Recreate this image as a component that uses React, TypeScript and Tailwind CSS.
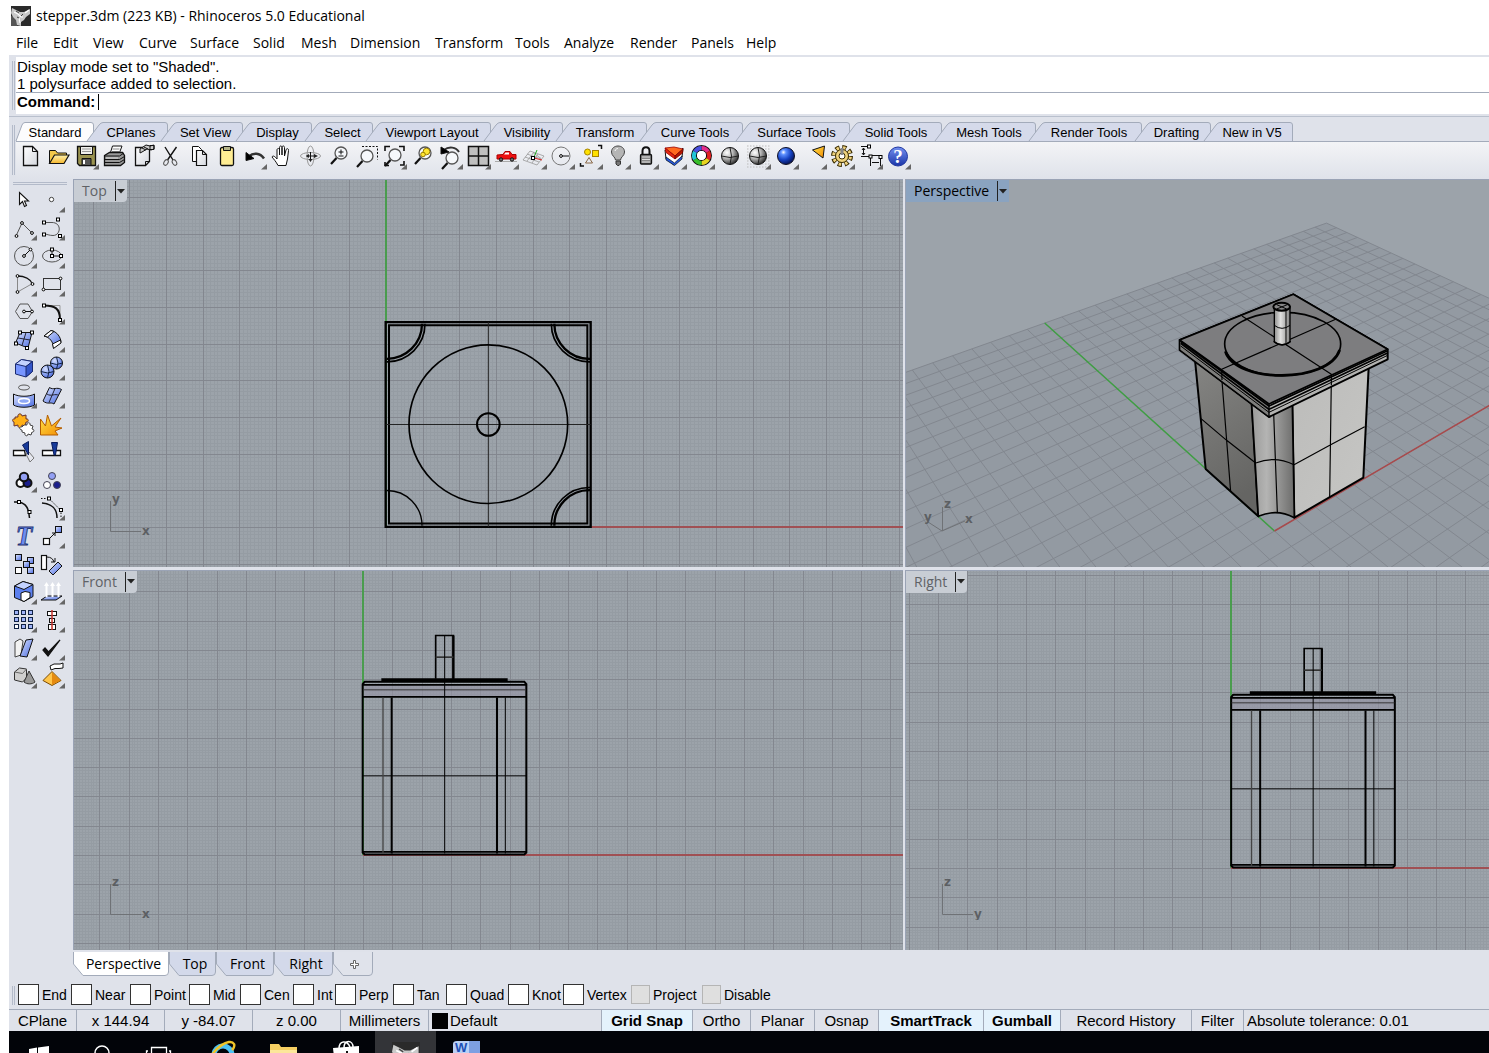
import React from "react";

type IconDef = { name: string; art: React.ReactNode; more?: boolean };

const K = "#111";

/* ---------- shared drawing pieces ---------- */

function Defs() {
  return (
    <svg className="absolute h-0 w-0" aria-hidden="true">
      <defs>
        <linearGradient id="paper" x1="0" y1="0" x2="1" y2="1">
          <stop offset="0" stopColor="#fff" />
          <stop offset="1" stopColor="#d4d7de" />
        </linearGradient>
        <linearGradient id="folder" x1="0" y1="0" x2="0" y2="1">
          <stop offset="0" stopColor="#fff3b0" />
          <stop offset="1" stopColor="#f5b62b" />
        </linearGradient>
        <radialGradient id="grayBall" cx="0.32" cy="0.3" r="0.75">
          <stop offset="0" stopColor="#fff" />
          <stop offset="0.45" stopColor="#bbb" />
          <stop offset="1" stopColor="#2a2a2a" />
        </radialGradient>
        <radialGradient id="blueBall" cx="0.35" cy="0.28" r="0.75">
          <stop offset="0" stopColor="#fff" />
          <stop offset="0.2" stopColor="#5c8fff" />
          <stop offset="0.6" stopColor="#1440c0" />
          <stop offset="1" stopColor="#06104e" />
        </radialGradient>
        <radialGradient id="softBall" cx="0.35" cy="0.3" r="0.8">
          <stop offset="0" stopColor="#d6e0ff" />
          <stop offset="0.6" stopColor="#7d97ee" />
          <stop offset="1" stopColor="#3a55c4" />
        </radialGradient>
        <linearGradient id="help" x1="0" y1="0" x2="0" y2="1">
          <stop offset="0" stopColor="#7390f0" />
          <stop offset="1" stopColor="#1a35a8" />
        </linearGradient>
        <linearGradient id="sheet" x1="0" y1="0" x2="1" y2="1">
          <stop offset="0" stopColor="#dbe4ff" />
          <stop offset="1" stopColor="#4a6be0" />
        </linearGradient>
        <linearGradient id="sun" x1="0" y1="0" x2="1" y2="1">
          <stop offset="0" stopColor="#ffe34a" />
          <stop offset="1" stopColor="#f38a00" />
        </linearGradient>
        <linearGradient id="cove" x1="0" y1="0" x2="1" y2="0">
          <stop offset="0" stopColor="#9a9a99" />
          <stop offset="0.35" stopColor="#b4b4b3" />
          <stop offset="0.6" stopColor="#989897" />
          <stop offset="1" stopColor="#6c6c6b" />
        </linearGradient>
        <linearGradient id="shaft" x1="0" y1="0" x2="1" y2="0">
          <stop offset="0" stopColor="#8d8d8c" />
          <stop offset="0.4" stopColor="#e0e0df" />
          <stop offset="1" stopColor="#858584" />
        </linearGradient>
        <linearGradient id="faceL" x1="0" y1="0" x2="0.3" y2="1">
          <stop offset="0" stopColor="#858583" />
          <stop offset="1" stopColor="#656563" />
        </linearGradient>
        <linearGradient id="faceR" x1="0" y1="0" x2="1" y2="1">
          <stop offset="0" stopColor="#bcbcba" />
          <stop offset="1" stopColor="#c6c6c4" />
        </linearGradient>
      </defs>
    </svg>
  );
}

function Icon({ art, more }: { art: React.ReactNode; more?: boolean }) {
  return (
    <svg width="28" height="28" viewBox="0 0 28 28" fill="none" stroke={K} aria-hidden="true">
      {art}
      {more && <path d="M27 21v5.5h-6z" fill="#666" stroke="none" />}
    </svg>
  );
}

function Node({ x, y }: { x: number; y: number }) {
  return <rect x={x - 1.5} y={y - 1.5} width="3" height="3" fill="#fff" stroke="#000" />;
}

function Dot({ x, y }: { x: number; y: number }) {
  return <circle cx={x} cy={y} r="1.4" fill="#fff" stroke="#000" />;
}

const lens = (cx: number, cy: number, fill = "#f6f8fb") => (
  <>
    <path d={`M${cx - 4.5} ${cy + 5}L${cx - 10} ${cy + 11}`} strokeWidth="2.2" />
    <circle cx={cx} cy={cy} r="6" fill={fill} stroke="#555" strokeWidth="1.3" />
  </>
);

const globeLines = (cx: number, cy: number, r: number, c: string) => (
  <g stroke={c} strokeWidth="1">
    <path d={`M${cx - r} ${cy}q${r} 3 ${2 * r} 0M${cx} ${cy - r}q3 ${r} 0 ${2 * r}`} />
  </g>
);

/* ---------- top toolbar ---------- */

const mainTools: IconDef[] = [
  { name: "New", art: <><path d="M7.500 3.500h9l5 5v14h-14z" fill="url(#paper)" strokeWidth="1.300" /><path d="M16.500 3.500v5h5" /></> },
  { name: "Open", art: <><path d="M5.500 20V7.500h6l2 2.500h9v3" fill="#f3c94b" /><path d="M5.500 20.500l5-8.500h14.500l-5 8.500z" fill="url(#folder)" strokeWidth="1.200" /></> },
  { name: "Save", more: true, art: <><path d="M5.500 3.500h18v19H7.500l-2-2z" fill="#9a9350" strokeWidth="1.300" /><path d="M8.500 3.500h12v8h-12z" fill="#f1f1ee" /><path d="M10 6h9M10 8.500h9" stroke="#999" /><path d="M10 15.500h9v7h-9z" fill="#555" /><path d="M12 17v4" stroke="#fff" strokeWidth="2" /></> },
  { name: "Print", art: <><path d="M10 11l2.500-8h9.500l-3 8z" fill="#fff" /><path d="M12.500 6h7M12 8.500h7" stroke="#888" /><path d="M4.500 12.500l5-3h13l2 3v7l-4 3H4.500z" fill="#999" strokeWidth="1.300" /><path d="M4.500 13h15l4.500-3M4.500 16.500h15l5-3M4.500 19.500h15l5-3" /><path d="M6 15h12" stroke="#ddd" /></> },
  { name: "Document properties", art: <><path d="M7.500 4.500h14v14l-4 4h-10z" fill="url(#paper)" strokeWidth="1.300" /><path d="M17.500 22.500v-4h4" /><path d="M12 6l6-4 4 1 4-1v4l-3 1-4-1-5 3-2 1z" fill="#ccc" /><path d="M22 2.500h4v4h-4zM14 5l4 2M16 4l4 2" /></> },
  { name: "Cut", art: <><path d="M9 4l8 13M20.500 4l-9 13" strokeWidth="1.400" /><ellipse cx="10" cy="19.500" rx="2" ry="3" transform="rotate(30 10 19.500)" stroke="#555" /><ellipse cx="18.500" cy="19.500" rx="2" ry="3" transform="rotate(-30 18.500 19.500)" stroke="#555" /></> },
  { name: "Copy", art: <><path d="M8.500 3.500h6l3 3v12h-9z" fill="#fff" /><path d="M12.500 7.500h6l4 4v11h-10z" fill="url(#paper)" strokeWidth="1.200" /><path d="M18.500 7.500v4h4" /></> },
  { name: "Paste", art: <><rect x="8.500" y="4.500" width="13" height="18" rx="1.500" fill="#ffed93" strokeWidth="1.300" /><path d="M11.500 3.500h7v4h-7z" fill="#b5b58a" /></> },
  { name: "Undo", more: true, art: <><path d="M9 13.500c4-4 11-4 15 2" stroke="#333" strokeWidth="2.500" /><path d="M6 9.500v8l8-2z" fill="#000" /></> },
  { name: "Pan", art: <path d="M11 22.500c-2-4-4-6-6-8.500 1-2 3-.5 5 2V7c0-2 2.500-2 2.500 0v5V4.500c0-2 2.500-2 2.500 0V12V4.500c0-2 2.500-2 2.500 0V13l1.500-6c.5-2 3-1.500 2.500.5L20.500 16l-1.500 6.500z" fill="#fff" transform="translate(-1 0)" /> },
  { name: "Rotate view", art: <><ellipse cx="14.500" cy="13" rx="10" ry="3.500" stroke="#999" /><ellipse cx="14.500" cy="13" rx="3.500" ry="10" stroke="#999" /><path d="M14.500 9v8M10.500 13h8" /><path d="M10 13l3-2v4zM14.500 19l-2-3h4zM18 11l4 2-4 2z" fill="#222" stroke="none" /></> },
  { name: "Zoom dynamic", art: <>{lens(17, 10)}<path d="M17 6.500v5M14.500 9h5M14.500 13h5" /></> },
  { name: "Zoom window", art: <><path d="M10 3.500h15.500v13" strokeDasharray="2 1.500" />{lens(15, 13)}</> },
  { name: "Zoom extents", more: true, art: <>{lens(15, 12)}<path d="M5 8V3.500h5M19 3.500h5V8M24 18v4h-4M5 19v3.500h4" strokeWidth="1.600" /></> },
  { name: "Zoom selected", art: <>{lens(17, 10)}<circle cx="18.500" cy="8.500" r="3.300" fill="#ffe632" stroke="#997c00" /><circle cx="15" cy="11.500" r="2.300" fill="#ffe632" stroke="#997c00" /></> },
  { name: "Undo view", more: true, art: <>{lens(16, 15)}<path d="M8 7c5-4 12-3 15 2" strokeWidth="2" stroke="#333" /><path d="M5 4v7l8-2z" fill="#000" /></> },
  { name: "Four viewports", more: true, art: <><rect x="4.500" y="3.500" width="20" height="19" fill="#c0c0c0" strokeWidth="1.500" /><path d="M14.500 3.500v19M4.500 13h20" strokeWidth="1.500" /></> },
  { name: "Set view", more: true, art: <><path d="M3 18.500h22" stroke="#aaa" /><path d="M5 12l6-.5 2-3h5l2 3h4v4.500H5z" fill="#e11" stroke="#a00" /><path d="M13.500 9.500h3.500v2h-5z" fill="#fff" stroke="none" /><circle cx="9" cy="16.500" r="1.700" fill="#777" /><circle cx="20" cy="16.500" r="1.700" fill="#777" /></> },
  { name: "CPlane", more: true, art: <><path d="M10 8l14 5-7 9L3 17zM7 11l14 5M5 14l14 5M14 9l-7 9M18 11l-6 9M13 9.500l8 6" stroke="#999" strokeWidth=".8" /><path d="M14 14l3-7" stroke="#2a2" /><path d="M14 15l8 2" stroke="#d22" /><Node x={13} y={15} /></> },
  { name: "Object snap", more: true, art: <><circle cx="13" cy="13" r="9" stroke="#777" /><path d="M13 13h8" /><Dot x={13} y={13} /></> },
  { name: "Select", more: true, art: <><path d="M22 2.500h3.500V6M4.500 20v3H8" strokeWidth="1.500" /><circle cx="11.500" cy="9" r="3" fill="#ffe100" stroke="#a58200" /><rect x="16.500" y="7.500" width="6" height="6" fill="#ffe100" stroke="#a58200" /><path d="M13 14.500l3.500 5.500h-7z" stroke="#864" /></> },
  { name: "Hide", more: true, art: <><path d="M11.500 17c0-3-4-4-4-8 0-8 13-8 13 0 0 4-4 5-4 8z" fill="#b5b5b5" stroke="#444" /><path d="M12 18h4.500v3l-1.500 1.500h-1.500L12 21z" fill="#777" stroke="#333" /><path d="M11 8c.5-2 2-2.500 3-2.500" stroke="#fff" /></> },
  { name: "Lock", more: true, art: <><path d="M10.500 12V8c0-5 7-5 7 0v4" strokeWidth="2" /><rect x="8.500" y="11.500" width="11" height="9.500" rx="1" fill="#888" strokeWidth="1.300" /><path d="M10 14h8M10 16.500h8M10 19h8" stroke="#ddd" /></> },
  { name: "Layers", more: true, art: <><path d="M5 7l10 6 8-8-1 9-8 8-8-6z" fill="#fff" /><path d="M5 5l9-1 9 2-8 7z" fill="#ff6a20" stroke="#900" strokeWidth=".8" /><path d="M5 5l10 8v3L6 9.500z" fill="#e42a12" stroke="#900" strokeWidth=".8" /><path d="M15 13l8-7-.5 4-7.500 6z" fill="#b51600" stroke="#700" strokeWidth=".8" /><path d="M6 14l8.500 6 7.500-7v3l-7.500 6.500L6 17z" fill="#2858dd" stroke="#123" strokeWidth=".8" /></> },
  { name: "Object properties", more: true, art: <g strokeWidth="4">
    <circle cx="13.500" cy="12.500" r="7.500" stroke="#111" strokeWidth="6" />
    <path d="M13.500 5a7.500 7.500 0 0 1 6.500 3.750" stroke="#e52d8a" /><path d="M20 8.750a7.500 7.500 0 0 1 0 7.500" stroke="#e02020" /><path d="M20 16.250a7.500 7.500 0 0 1-6.500 3.750" stroke="#e8d520" /><path d="M13.500 20a7.500 7.500 0 0 1-6.500-3.750" stroke="#37bf2c" /><path d="M7 16.250a7.500 7.500 0 0 1 0-7.500" stroke="#20c5d8" /><path d="M7 8.750A7.500 7.500 0 0 1 13.500 5" stroke="#4a50e0" /><circle cx="13.500" cy="12.500" r="4.500" fill="#fff" stroke="none" /></g> },
  { name: "Shade", art: <><circle cx="14" cy="13" r="8.500" fill="url(#grayBall)" />{globeLines(14, 13, 8.500, "#222")}</> },
  { name: "Shaded viewport", more: true, art: <><path d="M3 3h23M3 6h23M3 9h23M3 12h23M3 15h23M3 18h23M3 21h23M3 24h23" stroke="#bbb" strokeDasharray="1.500 1.500" /><circle cx="14" cy="13" r="8.500" fill="url(#grayBall)" />{globeLines(14, 13, 8.500, "#222")}</> },
  { name: "Render", more: true, art: <circle cx="14" cy="13" r="8.500" fill="url(#blueBall)" stroke="#112" /> },
  { name: "Spotlight", more: true, art: <path d="M12.500 7l12-4-1.500 12z" fill="url(#sun)" /> },
  { name: "Options", more: true, art: <><circle cx="14" cy="13" r="8.500" stroke="#3a2c00" strokeWidth="5" strokeDasharray="4 2.680" /><circle cx="14" cy="13" r="8.300" stroke="#efd27c" strokeWidth="3.200" strokeDasharray="2.400 4.120" strokeDashoffset="-.8" /><circle cx="14" cy="13" r="6.500" fill="#efd27c" stroke="#3a2c00" /><circle cx="14" cy="13" r="3" fill="#fff" stroke="#3a2c00" /><path d="M14 5v7" strokeWidth="3" stroke="#888" /></> },
  { name: "Dimension", more: true, art: <><path d="M5 3.500h8M5 13.500h9.500M7.500 5v7M14.500 15v8M24.500 15v8M16 19.500h7" /><path d="M6 7l1.500-2L9 7M6 10l1.500 2L9 10M14.500 12.500h9" /><Node x={13} y={3.500} /><Node x={14.500} y={13.500} /><Node x={24.500} y={14} /></> },
  { name: "Help", more: true, art: <><circle cx="14" cy="13.500" r="9.500" fill="url(#help)" stroke="#2238a0" /><text x="14" y="20" textAnchor="middle" fontFamily="Liberation Serif" fontWeight="700" fontSize="19" fill="#fff" stroke="none">?</text></> },
];

/* ---------- side toolbar (pairs, left to right) ---------- */

const sideTools: IconDef[] = [
  { name: "Pointer", art: <path d="M9.500 6.500v12l3-3 2 5 2-1-2-4.500h4z" fill="#fff" strokeWidth="1.100" /> },
  { name: "Point", more: true, art: <circle cx="13.500" cy="13.500" r="2.200" fill="#fff" stroke="#444" /> },
  { name: "Polyline", more: true, art: <><path d="M6 22l6-13 10 10" stroke="#555" /><Dot x={6.500} y={22} /><Dot x={12} y={9} /><Dot x={22} y={19} /></> },
  { name: "Curve", more: true, art: <><path d="M6 8.500h8c10 0 9 13 1 13-4 0-6-1.500-9-1.500" stroke="#555" /><Node x={6} y={8.500} /><Node x={20} y={5.500} /><Node x={6} y={20.500} /><Node x={22} y={22} /></> },
  { name: "Circle", more: true, art: <><circle cx="14" cy="14" r="9.500" stroke="#555" /><path d="M14 14l7-7" /><Dot x={14} y={14} /><Dot x={20.500} y={7.500} /></> },
  { name: "Ellipse", more: true, art: <><ellipse cx="14" cy="14" rx="9.500" ry="6" stroke="#555" /><path d="M14 7v7h9" /><Node x={14} y={7.500} /><Node x={14} y={14} /><Node x={23} y={14} /></> },
  { name: "Arc", more: true, art: <><path d="M7.500 6v16l15-8.500" stroke="#888" /><path d="M7.500 6c7 0 13 3 15 8" strokeWidth="1.300" /><Dot x={7.500} y={6} /><Dot x={22.500} y={14} /><Dot x={7.500} y={22} /></> },
  { name: "Rectangle", more: true, art: <><rect x="5.500" y="8.500" width="17" height="11" stroke="#333" /><Dot x={22.500} y={8.500} /><Dot x={5.500} y={19.500} /></> },
  { name: "Polygon", more: true, art: <><path d="M5.500 13.500L10 6h8l4.500 7.500L18 20.500h-8z" stroke="#555" /><path d="M14 13.500h8" /><Dot x={14} y={13.500} /><Dot x={22} y={13.500} /></> },
  { name: "Fillet curves", more: true, art: <><path d="M6 7.500h16v14" stroke="#999" /><path d="M6 7.500c11 0 16 3 16 14" strokeWidth="2" /><Node x={6} y={7.500} /><Node x={22} y={22} /></> },
  { name: "Surface from points", more: true, art: <><path d="M10 6.500h12l-4 15.500L5.500 17z" fill="url(#sheet)" /><path d="M16 6.500l-4 13M8 12l12 2" stroke="#223" /><Node x={10} y={6.500} /><Node x={22} y={6.500} /><Node x={6} y={17.500} /><Node x={17} y={22} /></> },
  { name: "Loft", more: true, art: <><path d="M6 10l7-5.500c6 1 10 7 10 12L15.500 22c0-6-4-11-9.500-12z" fill="url(#sheet)" /><path d="M6 10l7-5.500 3 1-6.500 5.500zM14.500 18l8-4 .5 3-7.500 5.500z" fill="#fff" /></> },
  { name: "Box", more: true, art: <><path d="M5.500 10l6-4.500 11 2v10L16 23l-10.500-3z" fill="#7795ff" stroke="#1a2a70" /><path d="M5.500 10l6-4.500 11 2-6.500 5z" fill="#c4d2ff" stroke="#1a2a70" /><path d="M16 12.500l6.500-5v10L16 23z" fill="#3455c8" stroke="#1a2a70" /></> },
  { name: "Spheres", more: true, art: <><circle cx="18.500" cy="9" r="6" fill="url(#softBall)" />{globeLines(18.500, 9, 6, "#124")}<circle cx="9.500" cy="17.500" r="6.500" fill="url(#softBall)" />{globeLines(9.500, 17.500, 6.500, "#124")}</> },
  { name: "Cylinder", more: true, art: <><ellipse cx="14" cy="5.500" rx="5.500" ry="2.500" stroke="#555" /><path d="M3.500 12c5 3 16 3 21 0v11c-5 3-16 3-21 0z" fill="url(#sheet)" /><ellipse cx="14" cy="19" rx="5.500" ry="2.500" stroke="#fff" strokeWidth="1.500" fill="#8fa8f5" /></> },
  { name: "Mesh", more: true, art: <><path d="M11.500 5.500c4 3 7-1 12 2L16 22c-4-2.500-6 1-11-3z" fill="url(#sheet)" /><path d="M17 6.500L11 20.500M9 12c4 3 8-1 12 1.500" stroke="#223" /></> },
  { name: "Join", art: <><path d="M5 7l3 0c-1-4 4-4 4-1l4-1 0 4c3-1 3 4 0 3l-1 4-3-1c0 4-5 3-4 0l-4 1 0-4c-2 0-2-4 1-3z" fill="#ffb016" stroke="#633" /><path d="M14 15l3 0c-1-3 4-3 3 0l3 1-1 3c3 0 2 4 0 3l-1 3-3-1c0 3-4 2-3-1l-3-1 0-2c-3 0-3-4 0-3z" fill="#fff" stroke="#444" /></> },
  { name: "Explode", art: <path d="M2.500 25V9l5 7 2-11 4 11L23 8l-6 9 7 1-7 3 3 4z" fill="url(#sun)" stroke="#b35c00" /> },
  { name: "Trim", art: <><path d="M3.500 12.500h11l1 5h-12z" fill="#fff" strokeWidth="1.300" /><path d="M16 16l3-2 5 6-4 4z" fill="#e5e7ee" stroke="#777" /><path d="M12.500 7l6-3.500V17z" fill="#173a9a" stroke="#0a1c5c" /></> },
  { name: "Split", art: <><path d="M4.500 12.500h18v5h-18z" fill="#fff" strokeWidth="1.300" /><path d="M13.500 4.500h6L17.500 17h-1.500z" fill="#173a9a" stroke="#0a1c5c" /></> },
  { name: "Group", more: true, art: <g strokeWidth="2"><circle cx="10.500" cy="17" r="4" fill="#fff" /><circle cx="17.500" cy="17" r="4" fill="#1b1f8c" /><circle cx="14" cy="11" r="4.200" fill="#93a0f4" /></g> },
  { name: "Ungroup", art: <g stroke="#445"><circle cx="9" cy="19" r="3.500" fill="#fff" /><circle cx="19" cy="19" r="3.500" fill="#1b1f8c" /><circle cx="14" cy="10" r="3.500" fill="#93a0f4" /></g> },
  { name: "Edit points", art: <><path d="M4 8c10-1 15 4 15.500 16" strokeWidth="1.500" /><Node x={9} y={8} /><Node x={19.500} y={18} /></> },
  { name: "Control points", more: true, art: <><path d="M3 4.500h8l12 12v7" strokeDasharray="1.500 1.500" /><path d="M4 9c11 1 15 6 15 15" strokeWidth="1.500" /><Node x={11} y={4.500} /><Node x={23} y={16} /></> },
  { name: "Text", art: <text x="14" y="23" textAnchor="middle" fontFamily="Liberation Serif" fontWeight="700" fontStyle="italic" fontSize="27" fill="#6c8cf0" stroke="#1c2f70" strokeWidth=".8">T</text> },
  { name: "Move", more: true, art: <><rect x="5.500" y="16.500" width="6" height="6" fill="#fff" strokeWidth="1.200" /><rect x="17.500" y="4.500" width="6" height="6" fill="url(#sheet)" /><path d="M12 16l5-5M14 11h3v3" /></> },
  { name: "Copy objects", art: <><rect x="5.500" y="4.500" width="6" height="6" fill="url(#sheet)" /><rect x="17.500" y="7.500" width="6" height="6" fill="url(#sheet)" /><rect x="5.500" y="17.500" width="6" height="6" fill="#fff" /><rect x="13.500" y="11.500" width="6" height="6" fill="url(#sheet)" /><rect x="17.500" y="17.500" width="6" height="6" fill="url(#sheet)" /></> },
  { name: "Rotate", art: <><rect x="3.500" y="5.500" width="5" height="14" fill="#fff" strokeWidth="1.200" /><path d="M11 21l9-9 4 4-9 9z" fill="url(#sheet)" /><path d="M9 7c4 0 6 2 7 5M17 8v4h-4" /></> },
  { name: "Boolean", more: true, art: <><path d="M4.500 8L13 3.500l10 3v12L14 23.500l-9.500-4z" fill="#5c80ef" /><path d="M4.500 8L13 3.500l10 3-9 5z" fill="#c3d2ff" /><path d="M11 15l4-1.500 5 1v5L14 23.500l-3-1.500z" fill="#fff" /></> },
  { name: "Project", more: true, art: <><path d="M3 22l6-4h15l-6 4z" fill="url(#sheet)" /><path d="M8.500 19V6M14.500 19V6M20.500 19V6" stroke="#fff" strokeWidth="2" /><path d="M6 8l2.500-4L11 8zM12 8l2.500-4L17 8zM18 8l2.500-4L23 8z" fill="#fff" stroke="none" /></> },
  { name: "Array", more: true, art: <>{[5.5, 12.5, 19.5].map((y) => [4.5, 11.5, 18.5].map((x) => <rect key={`${x}-${y}`} x={x} y={y - 1} width="4" height="4" fill={x === 4.5 && y === 19.5 ? "#fff" : "#9fb3f8"} stroke="#124" />))}</> },
  { name: "Align", more: true, art: <><rect x="9.500" y="5.500" width="9" height="4" fill="#fff" /><rect x="11.500" y="12.500" width="5" height="4" fill="#fff" /><rect x="10.500" y="18.500" width="7" height="5" fill="#fff" /><path d="M14 4v20" stroke="#c8322b" strokeWidth="1.500" /></> },
  { name: "Orient", more: true, art: <><path d="M5 8l5-3 3 2-2 14-6 2z" fill="#f2f2f2" stroke="#444" /><path d="M16 6l7-1-6 18-7-1z" fill="url(#sheet)" /></> },
  { name: "Check", more: true, art: <path d="M5 16l5 6L22 6l-11.500 12L7 14z" fill="#111" strokeWidth="1.200" /> },
  { name: "Solids", more: true, art: <><path d="M4.500 10l5-4 7 1v9l-4 4-8-2z" fill="#cfcfcf" stroke="#333" /><path d="M4.500 10l8 1.500 4-4.500" stroke="#666" /><path d="M19 9l6 11c-3 2.500-8 2.500-11 0z" fill="#999" stroke="#333" /></> },
  { name: "Render tools", more: true, art: <><path d="M14 9.500l9 9-9 5-9-5z" fill="#ffc54a" stroke="#7d4a00" /><path d="M14 10.500v12.500l8.500-4.500z" fill="#e58a10" stroke="none" /><path d="M12 4l4-2h6l3-1v5l-4 .5h-4l-4 1.500z" fill="#fff" /></> },
];

/* ---------- text data ---------- */

const menus: [string, string][] = [
  ["File", "w-[37px]"], ["Edit", "w-[40px]"], ["View", "w-[46px]"], ["Curve", "w-[51px]"], ["Surface", "w-[63px]"],
  ["Solid", "w-[48px]"], ["Mesh", "w-[49px]"], ["Dimension", "w-[85px]"], ["Transform", "w-[80px]"], ["Tools", "w-[49px]"],
  ["Analyze", "w-[66px]"], ["Render", "w-[61px]"], ["Panels", "w-[55px]"], ["Help", "w-[40px]"],
];

const toolTabs: [string, number][] = [
  ["Standard", 78], ["CPlanes", 74], ["Set View", 75], ["Display", 69], ["Select", 61], ["Viewport Layout", 118],
  ["Visibility", 72], ["Transform", 84], ["Curve Tools", 96], ["Surface Tools", 107], ["Solid Tools", 92],
  ["Mesh Tools", 94], ["Render Tools", 106], ["Drafting", 69], ["New in V5", 82],
];

const viewTabs: [string, number][] = [["Perspective", 96], ["Top", 47], ["Front", 58], ["Right", 59]];

const snaps: [string, string, boolean][] = [
  ["End", "w-[53px]", true], ["Near", "w-[59px]", true], ["Point", "w-[59px]", true], ["Mid", "w-[51px]", true],
  ["Cen", "w-[53px]", true], ["Int", "w-[42px]", true], ["Perp", "w-[58px]", true], ["Tan", "w-[53px]", true],
  ["Quad", "w-[62px]", true], ["Knot", "w-[55px]", true], ["Vertex", "w-[68px]", true], ["Project", "w-[71px]", false],
  ["Disable", "w-[72px]", false],
];

const toggles: [string, string, boolean][] = [
  ["Grid Snap", "w-[91px]", true], ["Ortho", "w-[58px]", false], ["Planar", "w-[64px]", false], ["Osnap", "w-[64px]", false],
  ["SmartTrack", "w-[105px]", true], ["Gumball", "w-[77px]", true], ["Record History", "w-[131px]", false], ["Filter", "w-[52px]", false],
];

/* ---------- viewports ---------- */

function gridPath(ox: number, oy: number, step: number, w: number, h: number) {
  let d = "";
  for (let i = -Math.floor(ox / step); ox + i * step < w; i++) d += `M${Math.round(ox + i * step)} 0V${h}`;
  for (let i = -Math.floor(oy / step); oy + i * step < h; i++) d += `M0 ${Math.round(oy + i * step)}H${w}`;
  return d;
}

function FlatGrid({ ox, oy, step }: { ox: number; oy: number; step: number }) {
  return (
    <g shapeRendering="crispEdges">
      <path d={gridPath(ox, oy, step / 10, 2400, 1200)} stroke="#959ca3" strokeWidth="1" />
      <path d={gridPath(ox, oy, step, 2400, 1200)} stroke="#83878f" strokeWidth="1" />
      <path d={`M${ox} ${oy}V0`} stroke="#4a9c4e" strokeWidth="2" />
      <path d={`M${ox} ${oy}H2400`} stroke="#a05054" strokeWidth="2" />
    </g>
  );
}

function AxisMark({ up, across }: { up: string; across: string }) {
  return (
    <svg className="absolute bottom-[30px] left-9" width="48" height="50" fill="none" stroke="#6f7276" aria-hidden="true">
      <path d="M.5 14v30.500H31" />
      <g fill="#5c5f63" stroke="none" fontFamily="DejaVu Sans" fontSize="12" fontWeight="700">
        <text x="2" y="16">{up}</text>
        <text x="32" y="48">{across}</text>
      </g>
    </svg>
  );
}

function Viewport({ title, active, children }: { title: string; active?: boolean; children: React.ReactNode }) {
  return (
    <section aria-label={title} className="relative min-h-0 min-w-0 overflow-hidden border-l border-t border-[#9aa3b5] bg-[#9ca3aa]">
      {children}
      <div className={active ? "relative inline-flex h-[22px] items-center bg-[#8aa3c0] text-black" : "relative inline-flex h-[22px] items-center rounded-br bg-[#c8cdd4] text-[#5f6266]"}>
        <span className="pl-2 pr-2 text-sm">{title}</span>
        <button aria-label={`${title} viewport menu`} className="flex h-5 w-3 items-center border-l border-[#222] pl-px">
          <svg width="9" height="5" aria-hidden="true"><path d="M0 0h8L4 4.500z" fill="#222" /></svg>
        </button>
      </div>
    </section>
  );
}

const drawing = "absolute inset-0 h-full w-full";

function TopView() {
  return (
    <Viewport title="Top">
      <svg className={drawing} fill="none" aria-hidden="true">
        <FlatGrid ox={312} oy={347} step={36.65} />
        <g transform="translate(296 120.500) scale(.33333)" stroke="#000" strokeWidth="5">
          <path d="M47 65H662V679H47z" strokeWidth="7" />
          <path d="M57 74H652V669H57z" strokeWidth="6" />
          <g stroke="#222" strokeWidth="3"><path d="M355 65V679M47 372H662" /></g>
          <circle cx="355" cy="371" r="238" />
          <circle cx="355" cy="372" r="34" strokeWidth="6" />
          <path d="M156 70A105 105 0 0 1 50 175M553 70A105 105 0 0 0 660 175M553 676A105 105 0 0 1 660 569" strokeWidth="7" />
          <path d="M165 70A114 114 0 0 1 50 184M544 70A114 114 0 0 0 660 184M544 676A114 114 0 0 1 660 561" />
          <path d="M50 570A105 105 0 0 1 156 676" strokeWidth="4" />
        </g>
      </svg>
      <AxisMark up="y" across="x" />
    </Viewport>
  );
}

function SideModel({ x, y }: { x: number; y: number }) {
  return (
    <g transform={`translate(${x} ${y}) scale(.33333)`} stroke="#000" strokeWidth="5">
      <path d="M39 190H528V226H39z" fill="#9694a5" fillOpacity=".6" stroke="none" />
      <path d="M44 181H523L529 188V693L523 699H44L38 693V188z" strokeWidth="6" />
      <path d="M94 175H473" strokeWidth="9" />
      <path d="M39 190H528M39 226H528" />
      <path d="M39 205H528" stroke="#333" strokeWidth="3" />
      <path d="M39 691H528" />
      <path d="M257 172V42H310V172" />
      <path d="M310 42V172" strokeWidth="7" />
      <path d="M257 107H310" stroke="#333" />
      <path d="M284 42V696M39 463H528M466 228V696" strokeWidth="3" />
      <path d="M99 228V696" stroke="#444" strokeWidth="4" />
      <path d="M125 228V696M441 228V696" strokeWidth="6" />
    </g>
  );
}

function FrontView() {
  return (
    <Viewport title="Front">
      <svg className={drawing} fill="none" aria-hidden="true">
        <FlatGrid ox={289} oy={284} step={29.3} />
        <SideModel x={276} y={50.5} />
      </svg>
      <AxisMark up="z" across="x" />
    </Viewport>
  );
}

function RightView() {
  return (
    <Viewport title="Right">
      <svg className={drawing} fill="none" aria-hidden="true">
        <FlatGrid ox={325} oy={297} step={29.3} />
        <SideModel x={312.5} y={63.5} />
      </svg>
      <AxisMark up="z" across="y" />
    </Viewport>
  );
}

/* Ground plane point (s along x, t along y) to screen. */
function ground(s: number, t: number) {
  const w = 1 + 0.0168 * s + 0.0221 * t;
  return `${((1274.5 + 42.6 * s + 11.6 * t) / w).toFixed(1)} ${((531 - 3.46 * s - 3.26 * t) / w).toFixed(1)}`;
}

function groundLines(step: number) {
  let d = "";
  for (let i = -20; i <= 20; i += step) d += `M${ground(i, -20)}L${ground(i, 20)}M${ground(-20, i)}L${ground(20, i)}`;
  return d;
}

function PerspectiveView() {
  return (
    <Viewport title="Perspective" active>
      <svg className={drawing} fill="none" aria-hidden="true">
        <g transform="translate(-906 -180)">
          <path d={`M${ground(-20, -20)}L${ground(20, -20)}L${ground(20, 20)}L${ground(-20, 20)}z`} fill="#939aa2" />
          <path d={groundLines(1)} stroke="#82878f" />
          <path d={`M${ground(0, 0)}L${ground(0, 20)}`} stroke="#3f9e43" strokeWidth="1.500" />
          <path d={`M${ground(0, 0)}L${ground(20, 0)}`} stroke="#a84a4c" strokeWidth="1.500" />
          <g transform="translate(1160 280) scale(.33333)" stroke="#000" strokeLinejoin="round">
            <path d="M105 240L137 567L295 709L275 370z" fill="url(#faceL)" strokeWidth="6" />
            <path d="M397 370L403 713L610 593L626 262z" fill="url(#faceR)" strokeWidth="6" />
            <path d="M275 370L295 709Q350 685 403 713L397 370z" fill="url(#cove)" strokeWidth="5" />
            <g strokeWidth="3.500">
              <path d="M185 290L212 636M123 416L200 481L287 549Q345 526 402 554L512 494L614 440M514 300L509 652M341 400L352 697" />
            </g>
            <path d="M59 180L59 210L327 411L683 238V208L400 43z" fill="#b3b3b1" strokeWidth="6" />
            <path d="M59 180V210L327 411V370z" fill="#7e7e7c" strokeWidth="4" />
            <path d="M59 180L400 43L683 208L327 372z" fill="#7d7d7f" strokeWidth="5" />
            <path d="M62 184L327 378L681 213M62 190L327 388L681 220" strokeWidth="5" />
            <path d="M62 198L327 397L681 227" strokeWidth="3" />
            <g strokeWidth="3.500"><path d="M246 108L514 283V316M527 118L185 268L186 300" /></g>
            <ellipse cx="368" cy="192" rx="174" ry="95" strokeWidth="5" />
            <path d="M196 214C225 310 505 312 539 210" strokeWidth="8" />
            <path d="M343 80V186Q366 202 390 186V80z" fill="url(#shaft)" strokeWidth="4" />
            <path d="M378 88V190M343 136Q366 154 390 136" strokeWidth="3" />
            <path d="M341 184Q366 206 392 184" strokeWidth="4" />
            <ellipse cx="365" cy="80" rx="25" ry="12" fill="#858586" strokeWidth="6" />
            <path d="M350 74L380 87M382 74L350 87" strokeWidth="3" />
          </g>
        </g>
      </svg>
      <svg className="absolute bottom-6 left-4" width="56" height="50" fill="none" stroke="#6f7276" aria-hidden="true">
        <path d="M20.500 14v24M20 38L6 29M20 38l23-10" />
        <g fill="#5c5f63" stroke="none" fontFamily="DejaVu Sans" fontSize="12" fontWeight="700">
          <text x="22" y="15">z</text>
          <text x="2" y="28">y</text>
          <text x="43" y="30">x</text>
        </g>
      </svg>
    </Viewport>
  );
}

/* ---------- bars ---------- */

function Grip() {
  return <div className="my-1 ml-[3px] mr-px w-[3px] shrink-0 border-x border-[#b3bac9]" />;
}

function ToolTab({ label, width, active }: { label: string; width: number; active: boolean }) {
  return (
    <button role="tab" aria-selected={active} className="relative h-[19px] shrink-0 text-center text-[13px] leading-[21px]" style={{ width }}>
      <svg className="absolute inset-0 overflow-visible" width={width} height="19" aria-hidden="true">
        <path
          d={`M${active ? 0 : -7} 19L${active ? 6 : 5} 3Q7 .5 9 .5H${width - 3}Q${width - 0.5} .5 ${width - 0.5} 3V19`}
          fill={active ? "#fcfcfd" : "#d5daea"}
          stroke="#a3abba"
        />
      </svg>
      <span className="relative whitespace-nowrap">{label}</span>
    </button>
  );
}

function ViewTab({ label, width, active, plain }: { label: string; width: number; active?: boolean; plain?: boolean }) {
  return (
    <button role="tab" aria-selected={!!active} aria-label={plain ? "New viewport tab" : undefined} className="relative h-6 shrink-0 pl-[5px] text-center text-sm leading-6" style={{ width }}>
      <svg className="absolute inset-0" width={width} height="24" aria-hidden="true">
        <path
          d={`M.5 0V12L10 23.500H${width - 4}Q${width - 0.5} 23.500 ${width - 0.5} 20V0`}
          fill={active ? "#fff" : plain ? "#e0e3eb" : "#d3d9ea"}
          stroke="#a3abba"
        />
        {plain && <path d="M20.500 8.500h2v3h3v2h-3v3h-2v-3h-3v-2h3z" fill="#fff" stroke="#666" />}
      </svg>
      <span className="relative">{label}</span>
    </button>
  );
}

function RhinoLogo({ size }: { size: number }) {
  return (
    <svg width={size} height={size} viewBox="0 0 20 20" aria-hidden="true">
      <rect width="20" height="20" fill="#2a2a2a" />
      <path d="M0 10l4 1 3 3-1 6H0z" fill="#555" />
      <path d="M1 2l4 2 4 2 4 0 6-3v5l-4 3-2 3-3 2 0 4-4-1-1-5-3-3-2-4z" fill="#c9c9c9" />
      <path d="M3 6l4 2 3 3 2 0M14 7l4-3M8 12l1 5" stroke="#fff" fill="none" strokeWidth="1.200" />
      <path d="M5 5l3 2M12 8l-2 2M6 11l2 1" stroke="#444" />
    </svg>
  );
}

function Taskbar() {
  const btn = "h-10 w-[61px] shrink-0";
  return (
    <footer className="ml-[9px] h-[22px] shrink-0 overflow-hidden bg-[#020409]">
      <nav aria-label="Taskbar" className="flex">
        <button aria-label="Start" className={btn}>
          <svg width="61" height="40" aria-hidden="true"><path d="M20 18l8-1.500V25h-8zM29 16.500L40 15v10H29zM20 26h8v8l-8-1zM29 26h11v9l-11-1z" fill="#fff" /></svg>
        </button>
        <button aria-label="Search" className={btn}>
          <svg width="61" height="40" fill="none" stroke="#fff" strokeWidth="1.500" aria-hidden="true"><circle cx="32" cy="22" r="7" /><path d="M27 27l-5 6" /></svg>
        </button>
        <button aria-label="Task view" className={btn}>
          <svg width="61" height="40" fill="none" stroke="#fff" strokeWidth="1.300" aria-hidden="true"><path d="M20.500 16.500h15v14h-15zM17 20h-1.500v8H17M38 20h1.500v8H38" /></svg>
        </button>
        <button aria-label="Internet Explorer" className={btn}>
          <svg width="61" height="40" fill="none" aria-hidden="true"><circle cx="31" cy="24" r="9" stroke="#4cc2f5" strokeWidth="5" /><path d="M18 30c2-12 20-24 24-17 1 2-1 5-2 6" stroke="#f0c52a" strokeWidth="2.500" /><path d="M24 24h15" stroke="#4cc2f5" strokeWidth="4" /></svg>
        </button>
        <button aria-label="File Explorer" className={btn}>
          <svg width="61" height="40" aria-hidden="true"><path d="M17 13h9l2 3h16v18H17z" fill="#f6cf62" /><path d="M17 19h27v15H17z" fill="#fce79a" /></svg>
        </button>
        <button aria-label="Store" className={btn}>
          <svg width="61" height="40" fill="none" aria-hidden="true"><path d="M19 17l26-2v20H21z" fill="#fff" /><path d="M25 18c0-9 8-9 11-2M30 17c0-9 9-8 9-1" stroke="#fff" strokeWidth="1.500" /><path d="M29 23h8M33 20v6" stroke="#111" strokeWidth="2" /></svg>
        </button>
        <button aria-label="Rhinoceros" className="h-10 w-[61px] shrink-0 bg-[#333438] pl-[17px] pt-[10px]"><RhinoLogo size={28} /></button>
        <button aria-label="Word" className={btn}>
          <svg width="61" height="40" aria-hidden="true"><path d="M17 13q0-3 4-3h23v26H17z" fill="#b9d0f5" /><path d="M33 10h11v26H33z" fill="#7d9fe2" /><text x="19" y="21" fontFamily="Liberation Sans" fontWeight="700" fontSize="13" fill="#1c4fb5">W</text></svg>
        </button>
      </nav>
    </footer>
  );
}

export default function App() {
  return (
    <div className="flex min-h-screen flex-col overflow-hidden bg-white font-['Open_Sans','Noto_Sans',sans-serif] text-sm text-black">
      <Defs />
      <header className="shrink-0">
        <div className="flex h-[31px] items-center gap-[5px] pl-[11px]">
          <RhinoLogo size={20} />
          <h1 className="text-sm">stepper.3dm (223 KB) - Rhinoceros 5.0 Educational</h1>
        </div>
        <nav aria-label="Main menu" className="flex h-6 items-center pl-4">
          {menus.map(([label, w]) => (
            <button key={label} className={`${w} shrink-0 text-left`}>{label}</button>
          ))}
        </nav>
      </header>

      <div className="ml-[9px] flex flex-1 flex-col bg-[#dfe2ea]">
        <section aria-label="Command history" className="flex h-[62px] shrink-0 border-b border-[#b9c0cd] pb-[2px] pt-[2px] font-['Liberation_Sans',Arial,sans-serif] text-[15px]">
          <Grip />
          <div className="flex-1 bg-white pt-px">
            <p className="h-[17px] px-px leading-[18px]">Display mode set to "Shaded".</p>
            <p className="h-[17px] px-px leading-[18px]">1 polysurface added to selection.</p>
            <div className="flex h-[18px] items-center border-t border-[#a3abba] px-px">
              <label htmlFor="command" className="font-bold">Command:</label>
              <div className="ml-[3px] h-4 w-px bg-black" />
              <input id="command" className="h-4 min-w-0 flex-1 bg-transparent outline-none" />
            </div>
          </div>
        </section>

        <section aria-label="Tool tabs" className="flex shrink-0 pt-1">
          <Grip />
          <div className="min-w-0 flex-1 font-['Liberation_Sans',Arial,sans-serif]">
            <div role="tablist" aria-label="Toolbars" className="flex h-5 pt-px">
              {toolTabs.map(([label, w], i) => <ToolTab key={label} label={label} width={w} active={i === 0} />)}
            </div>
            <div role="toolbar" aria-label="Standard" className="flex h-[38px] border-t border-[#a3abba] bg-gradient-to-b from-[#f3f4f6] to-[#dfe2ea] pt-px">
              {mainTools.map((t) => (
                <button key={t.name} aria-label={t.name} className="h-7 w-7 shrink-0"><Icon art={t.art} more={t.more} /></button>
              ))}
            </div>
          </div>
        </section>

        <div className="flex min-h-0 flex-1">
          <aside className="w-16 shrink-0 pl-px">
            <div className="mb-px ml-[3px] mr-[6px] mt-[3px] h-[3px] border-y border-[#b3bac9]" />
            <div role="toolbar" aria-label="Main tools" className="grid grid-cols-[28px_28px]">
              {sideTools.map((t) => (
                <button key={t.name} aria-label={t.name} className="h-7 w-7"><Icon art={t.art} more={t.more} /></button>
              ))}
            </div>
          </aside>
          <main className="flex min-w-0 flex-1 flex-col">
            <div className="grid min-h-[600px] flex-1 grid-cols-[830fr_584fr] grid-rows-[387fr_380fr] gap-x-[2px] gap-y-[3px]">
              <TopView />
              <PerspectiveView />
              <FrontView />
              <RightView />
            </div>
            <div role="tablist" aria-label="Viewports" className="mt-[2px] flex h-6 shrink-0">
              {viewTabs.map(([label, w], i) => <ViewTab key={label} label={label} width={w} active={i === 0} />)}
              <ViewTab label="" width={40} plain />
            </div>
          </main>
        </div>

        <form aria-label="Object snaps" className="mt-[6px] flex h-[27px] shrink-0 font-['Liberation_Sans',Arial,sans-serif]">
          <Grip />
          <div className="flex flex-1 items-center pb-[2px] pl-[2px]">
            {snaps.map(([label, w, enabled]) => (
              <label key={label} className={`${w} flex shrink-0 items-center gap-[3px] whitespace-nowrap`}>
                <input
                  type="checkbox"
                  disabled={!enabled}
                  className={enabled ? "h-[21px] w-[21px] shrink-0 appearance-none border border-[#333] bg-white checked:bg-[#3465c4]" : "h-[19px] w-[19px] shrink-0 appearance-none border border-[#b5b5b5] bg-[#dfdfdf]"}
                />
                {label}
              </label>
            ))}
          </div>
        </form>

        <div role="group" aria-label="Status bar" className="flex h-[22px] shrink-0 border-t border-[#a3abba] font-['Liberation_Sans',Arial,sans-serif] text-[15px] leading-[22px]">
          <button className="w-[68px] shrink-0 border-r border-[#a3abba]">CPlane</button>
          <span className="w-[88px] shrink-0 border-r border-[#a3abba] text-center">x 144.94</span>
          <span className="w-[88px] shrink-0 border-r border-[#a3abba] text-center">y -84.07</span>
          <span className="w-[88px] shrink-0 border-r border-[#a3abba] text-center">z 0.00</span>
          <button className="w-[88px] shrink-0 border-r border-[#a3abba]">Millimeters</button>
          <button className="flex w-[173px] shrink-0 items-center gap-[2px] border-r border-[#a3abba] pl-[3px]">
            <span className="h-4 w-4 bg-black" />Default
          </button>
          {toggles.map(([label, w, on]) => (
            <button key={label} aria-pressed={on} className={on ? `${w} shrink-0 border-r border-[#a3abba] bg-[#e4f2fc] font-bold` : `${w} shrink-0 border-r border-[#a3abba]`}>{label}</button>
          ))}
          <span className="whitespace-nowrap pl-[3px]">Absolute tolerance: 0.01</span>
        </div>
      </div>
      <Taskbar />
    </div>
  );
}
